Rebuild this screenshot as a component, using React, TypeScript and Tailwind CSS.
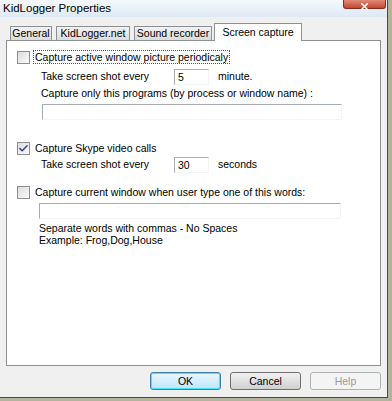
import { Check, X } from 'lucide-react';

function Checkbox({ checked }: { checked?: boolean }) {
  return (
    <span className="w-[13px] h-[13px] border border-[#8e8f8f] bg-gradient-to-br from-[#dcdcdc] to-[#fbfbfb] flex items-center justify-center shrink-0">
      {checked && <Check className="w-[11px] h-[11px] text-[#2a3d8f]" strokeWidth={3} />}
    </span>
  );
}

function SunkenInput({ value, className }: { value?: string; className: string }) {
  return (
    <div className={`border-t border-l border-[#a5acb5] border-r border-b border-r-[#f4f4f4] border-b-[#f4f4f4] bg-white pl-[3px] leading-[14px] ${className}`}>
      {value}
    </div>
  );
}

const tabs = [
  { label: 'General', w: 'w-[42px]', ml: 'ml-[4px]' },
  { label: 'KidLogger.net', w: 'w-[74px]', ml: 'ml-[4px]' },
  { label: 'Sound recorder', w: 'w-[78px]', ml: 'ml-[4px]' },
];

export default function App() {
  return (
    <div className="w-[392px] h-[401px] bg-[#b4b49e] font-['Liberation_Sans',Arial,sans-serif] text-[10.5px] text-black overflow-hidden">
      <div className="w-[388px] h-[398px] bg-[#f0f0f0] border-r border-b border-[#4a4a4a] flex flex-col">
        <div className="h-[17px] bg-gradient-to-b from-[#f5f8fb] to-[#dde9f5] flex items-start justify-between">
          <span className="pl-[3px] pt-[1px] text-[11.5px] leading-[15px]">KidLogger Properties</span>
          <div className="w-[43px] h-[9px] bg-gradient-to-b from-[#e08a78] to-[#c4452e] rounded-bl-[3px] rounded-br-[3px] border-l border-b border-r border-[#8c2b1e] flex items-end justify-center mr-[1px]">
            <X className="w-[11px] h-[11px] text-white -mb-[4px]" strokeWidth={3.5} />
          </div>
        </div>
        <div className="flex flex-col px-[6px] pt-[6px]">
          <div className="flex items-end h-[17px]">
            {tabs.map((t) => (
              <div
                key={t.label}
                className={`h-[14px] ${t.w} ${t.ml} border border-b-0 border-[#8d9093] bg-gradient-to-b from-[#f2f2f2] to-[#dcdcdc] leading-[13px] text-center whitespace-nowrap`}
              >
                {t.label}
              </div>
            ))}
            <div className="h-[18px] w-[88px] ml-[2px] border border-b-0 border-[#8d9093] bg-white leading-[16px] text-center -mb-px relative z-10 whitespace-nowrap">
              Screen capture
            </div>
          </div>
          <div className="h-[326px] w-[375px] border border-[#8d9093] bg-white pl-[10px] pt-[9px] flex flex-col">
            <div className="flex items-center gap-[3px] h-[14px]">
              <Checkbox />
              <span className="border border-dotted border-[#555] px-[1px] leading-[12px]">
                Capture active window picture periodicaly
              </span>
            </div>
            <div className="flex items-center h-[16px] mt-[5px] pl-[24px]">
              <span className="w-[133px]">Take screen shot every</span>
              <SunkenInput value="5" className="w-[35px] h-[16px]" />
              <span className="ml-[9px]">minute.</span>
            </div>
            <div className="pl-[24px] mt-[2px] leading-[13px]">
              Capture only this programs (by process or window name) :
            </div>
            <SunkenInput className="ml-[25px] mt-[4px] w-[300px] h-[16px]" />
            <div className="flex items-center gap-[3px] h-[14px] mt-[21px]">
              <Checkbox checked />
              <span className="px-[2px] leading-[12px]">Capture Skype video calls</span>
            </div>
            <div className="flex items-center h-[16px] mt-[2px] pl-[24px]">
              <span className="w-[133px]">Take screen shot every</span>
              <SunkenInput value="30" className="w-[35px] h-[16px]" />
              <span className="ml-[9px]">seconds</span>
            </div>
            <div className="flex items-center gap-[3px] h-[14px] mt-[12px]">
              <Checkbox />
              <span className="px-[2px] leading-[12px]">
                Capture current window when user type one of this words:
              </span>
            </div>
            <SunkenInput className="ml-[22px] mt-[4px] w-[302px] h-[16px]" />
            <div className="pl-[22px] mt-[3px] leading-[12px]">
              <div>Separate words with commas - No Spaces</div>
              <div>Example: Frog,Dog,House</div>
            </div>
          </div>
          <div className="flex justify-end gap-[9px] mt-[6px] pr-[1px] w-[376px]">
            <button className="w-[71px] h-[18px] rounded-[3px] border border-[#3c7fb1] bg-gradient-to-b from-[#eaf6fd] to-[#bee6fd] shadow-[inset_0_0_0_1px_#48e0fb] leading-[14px]">
              OK
            </button>
            <button className="w-[71px] h-[18px] rounded-[3px] border border-[#707070] bg-gradient-to-b from-[#f2f2f2] to-[#d0d0d0] leading-[14px]">
              Cancel
            </button>
            <button className="w-[71px] h-[18px] rounded-[3px] border border-[#adb2b5] bg-[#f4f4f4] text-[#9a9a9a] leading-[14px]">
              Help
            </button>
          </div>
        </div>
      </div>
    </div>
  );
}
